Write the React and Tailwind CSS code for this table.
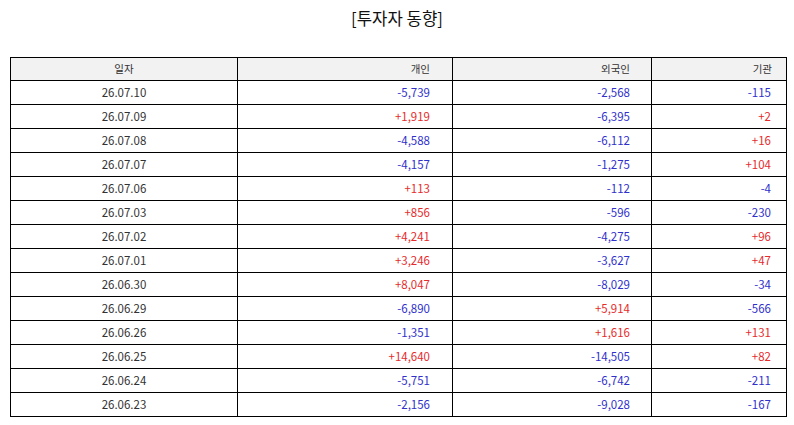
import React from "react";

const rows = [
  ["26.07.10", "-5,739", "-2,568", "-115"],
  ["26.07.09", "+1,919", "-6,395", "+2"],
  ["26.07.08", "-4,588", "-6,112", "+16"],
  ["26.07.07", "-4,157", "-1,275", "+104"],
  ["26.07.06", "+113", "-112", "-4"],
  ["26.07.03", "+856", "-596", "-230"],
  ["26.07.02", "+4,241", "-4,275", "+96"],
  ["26.07.01", "+3,246", "-3,627", "+47"],
  ["26.06.30", "+8,047", "-8,029", "-34"],
  ["26.06.29", "-6,890", "+5,914", "-566"],
  ["26.06.26", "-1,351", "+1,616", "+131"],
  ["26.06.25", "+14,640", "-14,505", "+82"],
  ["26.06.24", "-5,751", "-6,742", "-211"],
  ["26.06.23", "-2,156", "-9,028", "-167"],
];

function Num({ v, pr }) {
  const cls = v.startsWith("+") ? "text-[#e62b2b]" : "text-[#3030cc]";
  return (
    <td className={`border border-black text-right ${pr} ${cls}`}>{v}</td>
  );
}

export default function App() {
  return (
    <div
      className="w-[794px] h-[425px] bg-white text-[#333]"
      style={{ fontFamily: '"Noto Sans CJK KR", "Noto Sans", sans-serif' }}
    >
      <div className="h-[57px] pt-[6px] text-center text-[16.7px] leading-[24px] text-[#111]">
        [투자자 동향]
      </div>
      <table className="ml-[10px] w-[776px] border-collapse table-fixed text-[11.5px]">
        <colgroup>
          <col className="w-[227px]" />
          <col className="w-[215px]" />
          <col className="w-[199px]" />
          <col className="w-[135px]" />
        </colgroup>
        <thead>
          <tr className="h-[23px] bg-[#f2f2f2] text-[10.5px]">
            <th className="border border-black font-normal text-center">일자</th>
            <th className="border border-black font-normal text-right pr-[22px]">개인</th>
            <th className="border border-black font-normal text-right pr-[21px]">외국인</th>
            <th className="border border-black font-normal text-right pr-[14px]">기관</th>
          </tr>
        </thead>
        <tbody>
          {rows.map((r) => (
            <tr key={r[0]} className="h-[24px]">
              <td className="border border-black text-center">{r[0]}</td>
              <Num v={r[1]} pr="pr-[22px]" />
              <Num v={r[2]} pr="pr-[21px]" />
              <Num v={r[3]} pr="pr-[15px]" />
            </tr>
          ))}
        </tbody>
      </table>
    </div>
  );
}
